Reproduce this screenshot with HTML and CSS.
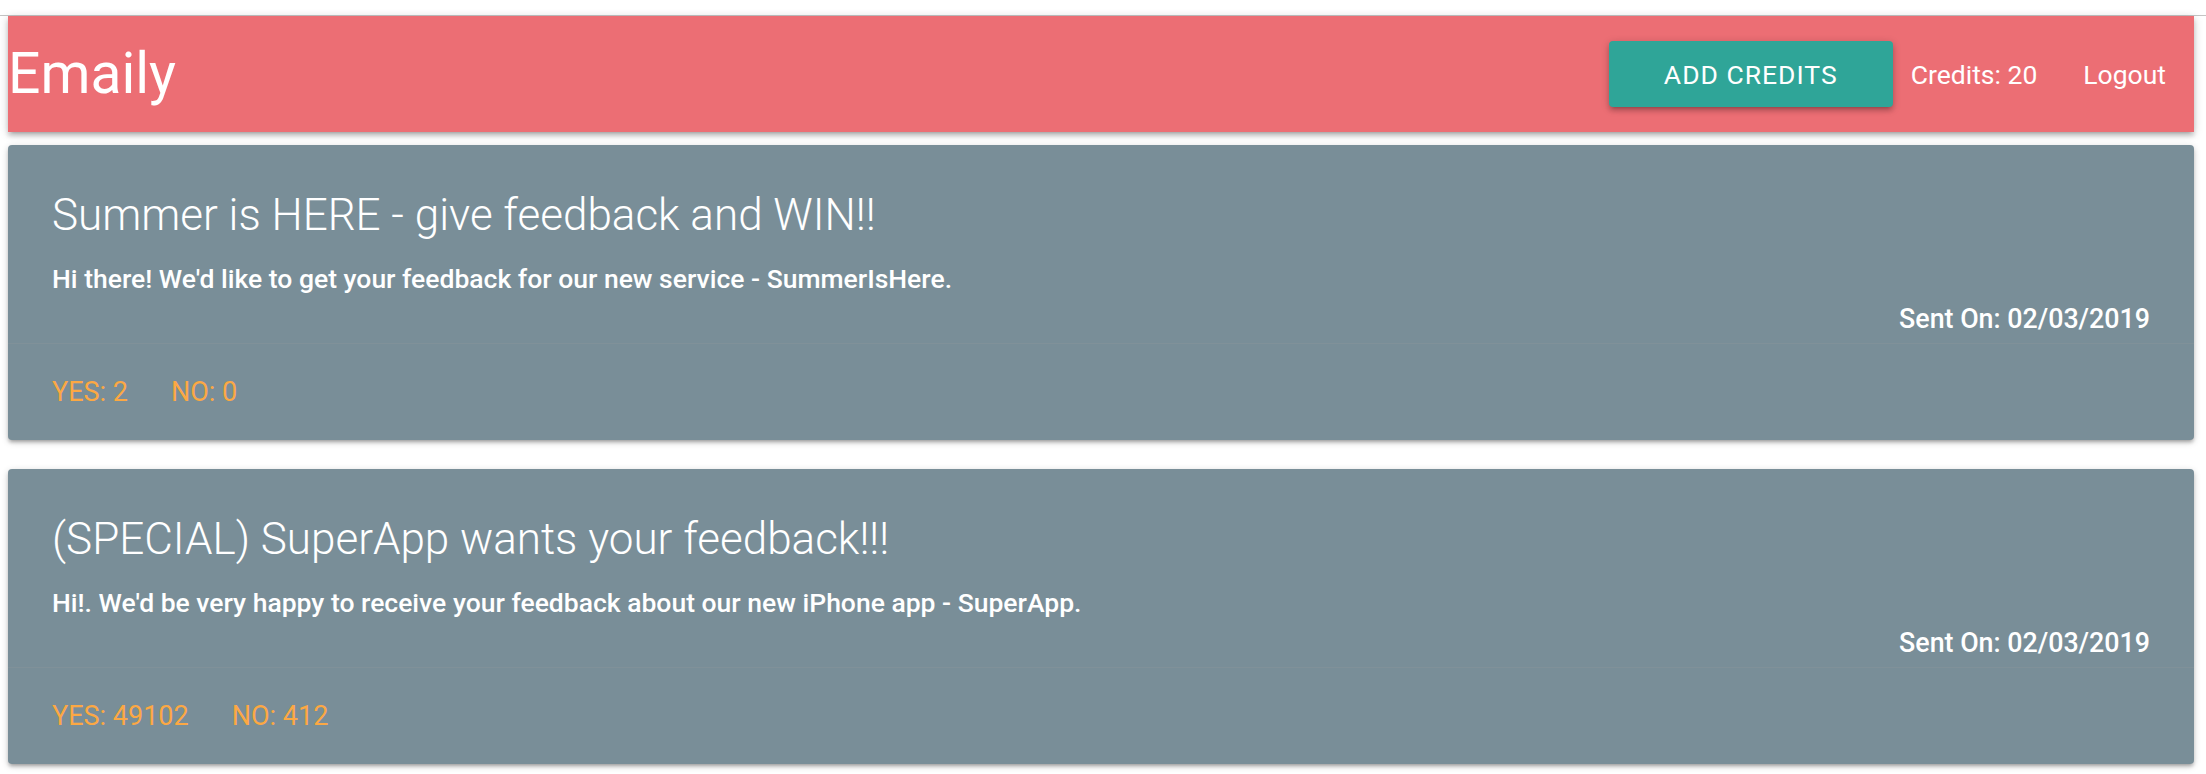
FILE: index.html
```html
<!DOCTYPE html>
<html lang="en">
<head>
<meta charset="utf-8">
<title>Emaily</title>
<link rel="stylesheet" href="styles.css">
</head>
<body>
<div class="topline"></div>
<div class="page">
  <nav class="navbar">
    <a class="brand" href="#">Emaily</a>
    <ul class="nav-links">
      <li><a class="btn-credits" href="#">Add Credits</a></li>
      <li class="credits">Credits: 20</li>
      <li><a class="logout" href="#">Logout</a></li>
    </ul>
  </nav>

  <div class="card">
    <div class="card-content">
      <span class="card-title">Summer is HERE - give feedback and WIN!!</span>
      <p class="card-body">Hi there! We'd like to get your feedback for our new service - SummerIsHere.</p>
      <p class="sent-on">Sent On: 02/03/2019</p>
    </div>
    <div class="card-action">
      <a href="#">Yes: 2</a>
      <a href="#">No: 0</a>
    </div>
  </div>

  <div class="card">
    <div class="card-content">
      <span class="card-title">(SPECIAL) SuperApp wants your feedback!!!</span>
      <p class="card-body">Hi!. We'd be very happy to receive your feedback about our new iPhone app - SuperApp.</p>
      <p class="sent-on">Sent On: 02/03/2019</p>
    </div>
    <div class="card-action">
      <a href="#">Yes: 49102</a>
      <a href="#">No: 412</a>
    </div>
  </div>
</div>
</body>
</html>
```

FILE: styles.css
```css
* {
  box-sizing: border-box;
}

html, body {
  margin: 0;
  padding: 0;
  background: #ffffff;
}

body {
  padding-top: 15px;
  font-family: Roboto, "Liberation Sans", sans-serif;
  color: #ffffff;
}

a {
  text-decoration: none;
  color: inherit;
}

.topline {
  border-top: 1px solid #c4c4c4;
}

.page {
  padding: 0 12px 0 8px;
}

.navbar {
  height: 116px;
  background: #ec6e74;
  display: flex;
  align-items: center;
  justify-content: space-between;
  box-shadow: 0 4px 4px 0 rgba(0, 0, 0, 0.14), 0 5px 2px -4px rgba(0, 0, 0, 0.12), 0 2px 9px 0 rgba(0, 0, 0, 0.2);
}

.brand {
  font-size: 57px;
  line-height: 116px;
  color: #ffffff;
}

.nav-links {
  list-style: none;
  margin: 0;
  padding: 0 28px 0 0;
  display: flex;
  align-items: center;
  font-size: 26.5px;
}

.btn-credits {
  display: flex;
  align-items: center;
  justify-content: center;
  width: 284px;
  height: 66px;
  background: #2fa598;
  border-radius: 4px;
  text-transform: uppercase;
  letter-spacing: 1px;
  font-size: 26.5px;
  box-shadow: 0 4px 4px 0 rgba(0, 0, 0, 0.14), 0 5px 2px -4px rgba(0, 0, 0, 0.12), 0 2px 9px 0 rgba(0, 0, 0, 0.2);
}

.credits {
  margin-left: 18px;
}

.logout {
  display: block;
  margin-left: 46px;
}

.card {
  margin-top: 12.5px;
  margin-bottom: 29px;
  background: #798e98;
  border-radius: 4px;
  box-shadow: 0 3px 3px 0 rgba(0, 0, 0, 0.14), 0 4px 2px -3px rgba(0, 0, 0, 0.12), 0 2px 7px 0 rgba(0, 0, 0, 0.2);
}

.card + .card {
  margin-top: 0;
}

.card-content {
  padding: 41px 44px 3px 44px;
}

.card-title {
  display: block;
  font-size: 44px;
  font-weight: 300;
  line-height: 58px;
  margin-bottom: 17px;
}

.card-body {
  margin: 0;
  font-size: 26.5px;
  line-height: 36.6px;
  font-weight: 500;
}

.sent-on {
  margin: 3px 0 0 0;
  text-align: right;
  font-size: 26.8px;
  line-height: 39.75px;
  font-weight: 500;
}

.card-action {
  border-top: 1px solid rgba(160, 160, 160, 0.2);
  padding: 29px 44px 27px 44px;
  display: flex;
  gap: 43px;
  font-size: 27px;
  line-height: 39.75px;
}

.card-action a {
  color: #fca843;
  text-transform: uppercase;
}
```
